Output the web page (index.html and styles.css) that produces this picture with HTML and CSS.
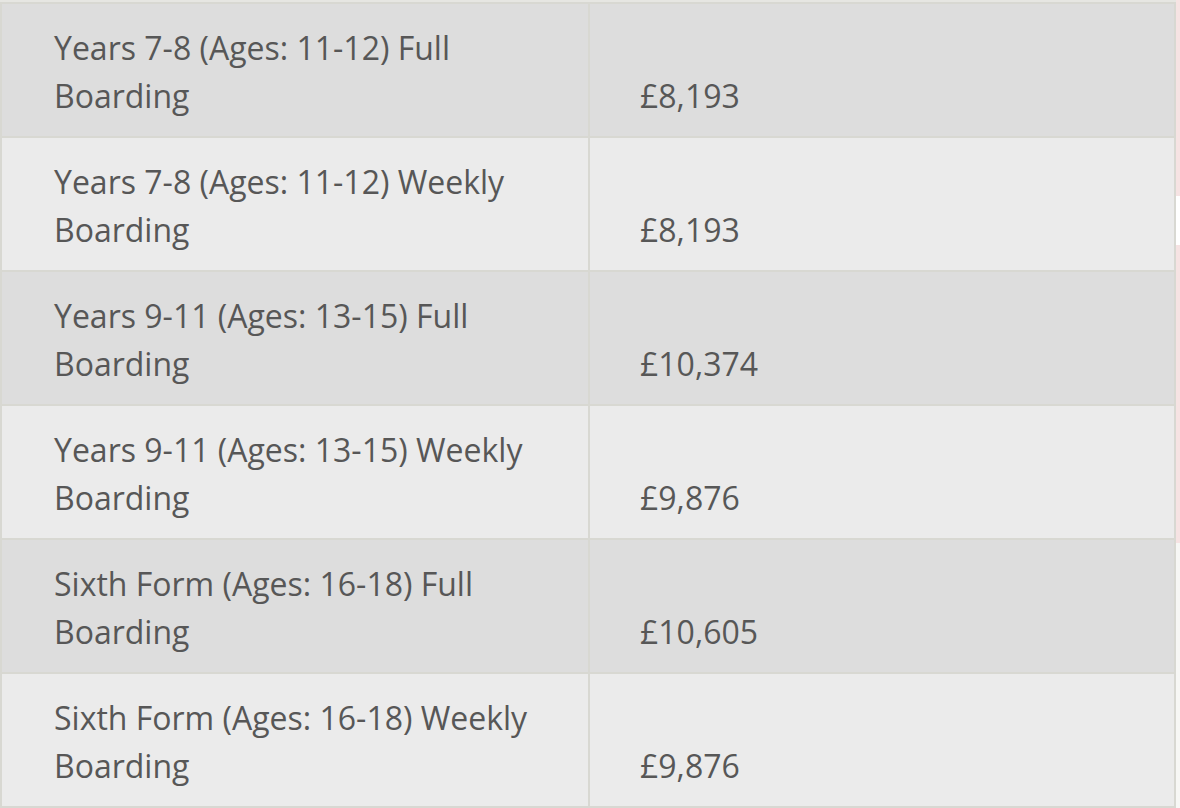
FILE: index.html
```html
<!DOCTYPE html>
<html lang="en">
<head>
<meta charset="utf-8">
<title>Boarding fees</title>
<link rel="stylesheet" href="styles.css">
</head>
<body>
<div class="page">
  <div class="wrap">
    <table class="fees">
      <tbody>
        <tr class="odd"><td class="label">Years 7-8 (Ages: 11-12) Full Boarding</td><td class="price">£8,193</td></tr>
        <tr class="even"><td class="label">Years 7-8 (Ages: 11-12) Weekly Boarding</td><td class="price">£8,193</td></tr>
        <tr class="odd"><td class="label">Years 9-11 (Ages: 13-15) Full Boarding</td><td class="price">£10,374</td></tr>
        <tr class="even"><td class="label">Years 9-11 (Ages: 13-15) Weekly Boarding</td><td class="price">£9,876</td></tr>
        <tr class="odd"><td class="label">Sixth Form (Ages: 16-18) Full Boarding</td><td class="price">£10,605</td></tr>
        <tr class="even"><td class="label">Sixth Form (Ages: 16-18) Weekly Boarding</td><td class="price">£9,876</td></tr>
      </tbody>
    </table>
  </div>
  <div class="edge"></div>
</div>
</body>
</html>
```
FILE: styles.css
```css
html, body {
  margin: 0;
  padding: 0;
  background: #ffffff;
}
.page {
  display: flex;
  width: 1180px;
  height: 808px;
  overflow: hidden;
}
.wrap {
  flex: none;
  width: 1176px;
  align-self: flex-start;
  padding-top: 2px;
  background: #e6e6e2;
}
.fees {
  width: 1176px;
  border-collapse: collapse;
  border: 2px solid #d8d8d2;
  table-layout: fixed;
  font-family: "Open Sans", "Noto Sans", sans-serif;
  font-size: 32px;
  line-height: 48px;
  color: #575757;
}
.fees td {
  border: 2px solid #d8d8d2;
  padding: 20px 40px 16px 52px;
  vertical-align: bottom;
}
.fees td.label {
  width: 494px;
}
.fees td.price {
  padding-left: 50px;
}
.odd td {
  background: #dddddd;
}
.even td {
  background: #ebebeb;
}
.edge {
  flex: none;
  width: 4px;
  height: 808px;
  background: linear-gradient(to bottom, #f6e3e3 0, #f6e3e3 196px, #ffffff 196px, #ffffff 245px, #f6e3e3 245px, #f6e3e3 543px, #f7f7f5 543px);
}
```
